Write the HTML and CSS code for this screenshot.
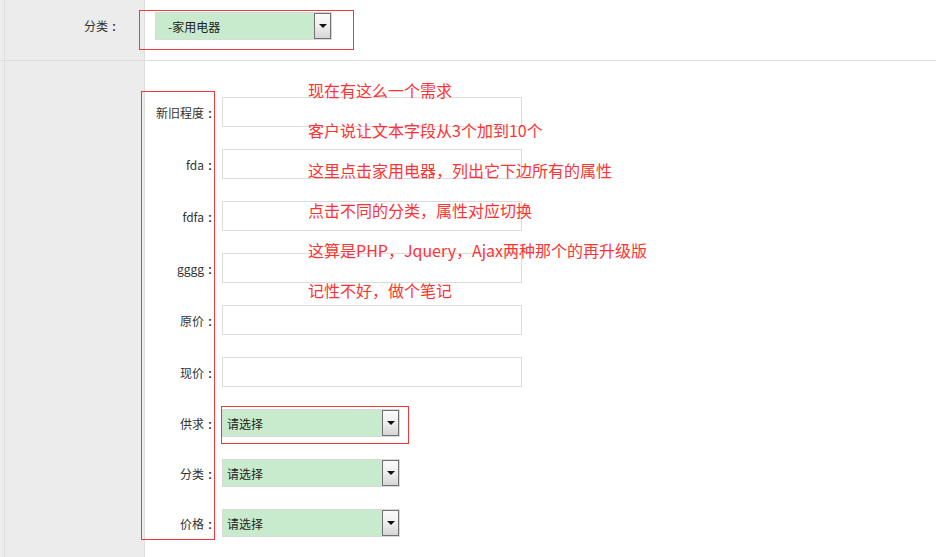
FILE: index.html
```html
<!DOCTYPE html>
<html lang="zh">
<head>
<meta charset="utf-8">
<title>分类属性</title>
<link rel="stylesheet" href="styles.css">
</head>
<body>
<div class="page">
  <div class="row row-top">
    <div class="side"><span class="side-label">分类<span class="colon">:</span></span></div>
    <div class="main main-top">
      <div class="select select-cat">
        <span class="select-text">-家用电器</span>
        <span class="select-btn"><span class="tri"></span></span>
      </div>
    </div>
  </div>
  <div class="row row-body">
    <div class="side"></div>
    <div class="main main-body">
      <div class="form">
        <label class="flabel">新旧程度<span class="colon">:</span></label><div class="input"></div>
        <label class="flabel">fda<span class="colon">:</span></label><div class="input"></div>
        <label class="flabel">fdfa<span class="colon">:</span></label><div class="input"></div>
        <label class="flabel">gggg<span class="colon">:</span></label><div class="input"></div>
        <label class="flabel">原价<span class="colon">:</span></label><div class="input"></div>
        <label class="flabel">现价<span class="colon">:</span></label><div class="input"></div>
        <label class="flabel">供求<span class="colon">:</span></label>
        <div class="select select-attr"><span class="select-text">请选择</span><span class="select-btn"><span class="tri"></span></span></div>
        <label class="flabel">分类<span class="colon">:</span></label>
        <div class="select select-attr"><span class="select-text">请选择</span><span class="select-btn"><span class="tri"></span></span></div>
        <label class="flabel">价格<span class="colon">:</span></label>
        <div class="select select-attr"><span class="select-text">请选择</span><span class="select-btn"><span class="tri"></span></span></div>
      </div>
    </div>
  </div>

  <div class="note">
    <p>现在有这么一个需求</p>
    <p>客户说让文本字段从3个加到10个</p>
    <p>这里点击家用电器，列出它下边所有的属性</p>
    <p>点击不同的分类，属性对应切换</p>
    <p>这算是PHP，Jquery，Ajax两种那个的再升级版</p>
    <p>记性不好，做个笔记</p>
  </div>
  <div class="mark mark-top"></div>
  <div class="mark mark-labels"></div>
  <div class="mark mark-select"></div>
</div>
</body>
</html>
```
FILE: styles.css
```css
html, body {
  margin: 0;
  padding: 0;
  background: #fff;
}
body {
  font-family: "Liberation Sans", "Noto Sans CJK SC", sans-serif;
  font-size: 12px;
  color: #222;
}
.page {
  position: relative;
  width: 936px;
  height: 557px;
  overflow: hidden;
}
.row {
  display: flex;
}
.row-top {
  height: 60px;
  border-bottom: 1px solid #dddddd;
}
.row-body {
  height: 496px;
}
.side {
  width: 144px;
  flex: none;
  background: #ececec;
  border-right: 1px solid #dddddd;
  box-shadow: inset 4px 0 0 #ececec, inset 5px 0 0 #dedede;
  box-sizing: content-box;
}
.row-top .side {
  display: flex;
  justify-content: flex-end;
  padding-top: 12px;
  box-sizing: border-box;
  width: 145px;
  padding-right: 28px;
}
.side-label {
  line-height: 28px;
  font-family: "Noto Sans CJK SC", sans-serif;
  font-size: 12px;
  color: #333;
}
.colon {
  font-family: "Liberation Sans", sans-serif;
  font-weight: bold;
  margin-left: 4px;
}
.main {
  flex: 1;
}
.main-top {
  padding: 12px 0 0 10px;
}
.main-body {
  padding: 36px 0 0 0;
}
.form {
  display: grid;
  grid-template-columns: 68px 300px;
  column-gap: 9px;
  row-gap: 22px;
  align-items: center;
}
.flabel {
  text-align: right;
  font-family: "Noto Sans CJK SC", sans-serif;
  font-size: 12px;
  color: #333;
  white-space: nowrap;
  padding-right: 1px;
}
.input {
  height: 30px;
  box-sizing: border-box;
  border: 1px solid #dcdcdc;
  background: #fff;
}
.select {
  display: flex;
  align-items: center;
  box-sizing: border-box;
  height: 28px;
  background: #c7ebcc;
  border: 1px solid #d9d9d9;
}
.select-cat {
  width: 177px;
}
.select-attr {
  width: 178px;
}
.select-text {
  flex: 1;
  font-family: "Noto Sans CJK SC", sans-serif;
  font-size: 12px;
  color: #222;
  padding-left: 4px;
}
.select-cat .select-text {
  padding-left: 12px;
}
.select-btn {
  flex: none;
  width: 17px;
  height: 26px;
  box-sizing: border-box;
  border: 1px solid #707070;
  background: linear-gradient(#fbfbfb, #f0f0f0 45%, #d6d6d6);
  display: flex;
  align-items: center;
  justify-content: center;
}
.tri {
  width: 0;
  height: 0;
  border-left: 4px solid transparent;
  border-right: 4px solid transparent;
  border-top: 4px solid #111;
}
.note {
  position: absolute;
  left: 308px;
  top: 70px;
  color: #ff3333;
  font-family: "Noto Sans CJK SC", sans-serif;
  font-size: 16px;
}
.note p {
  margin: 0;
  line-height: 40px;
  white-space: nowrap;
}
.mark {
  position: absolute;
  border: 1px solid #f03a3a;
  box-sizing: border-box;
}
.mark-top {
  left: 139px;
  top: 10px;
  width: 215px;
  height: 40px;
}
.mark-labels {
  left: 141px;
  top: 91px;
  width: 74px;
  height: 449px;
}
.mark-select {
  left: 221px;
  top: 406px;
  width: 188px;
  height: 38px;
}
```
